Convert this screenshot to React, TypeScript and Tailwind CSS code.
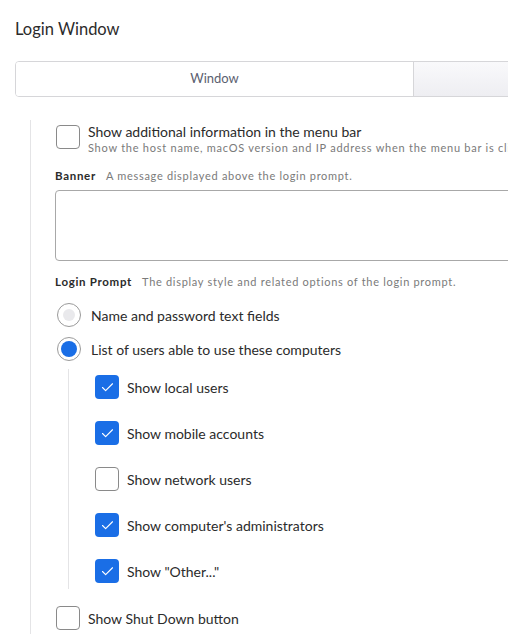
import { Check } from "lucide-react";

type Opt = { label: string; checked: boolean };

const userOptions: Opt[] = [
  { label: "Show local users", checked: true },
  { label: "Show mobile accounts", checked: true },
  { label: "Show network users", checked: false },
  { label: "Show computer's administrators", checked: true },
  { label: "Show \"Other...\"", checked: true },
];

function Box({ checked }: { checked: boolean }) {
  return checked ? (
    <span className="flex h-6 w-6 shrink-0 items-center justify-center rounded-[4px] bg-[#1a6ee6]">
      <Check size={15} strokeWidth={1.8} className="text-white" />
    </span>
  ) : (
    <span className="h-6 w-6 shrink-0 rounded-[4px] border border-[#8a8a8a] bg-white" />
  );
}

function Radio({ on }: { on: boolean }) {
  return (
    <span className="flex h-6 w-6 shrink-0 items-center justify-center rounded-full border border-[#9a9a9a] bg-white">
      <span className={on ? "h-4 w-4 rounded-full bg-[#1a6ee6]" : "h-3 w-3 rounded-full bg-[#e9e9ec]"} />
    </span>
  );
}

function Heading({ title, text }: { title: string; text: string }) {
  return (
    <div className="flex items-baseline gap-[10px] whitespace-nowrap leading-[14px]">
      <span className="text-[11.5px] font-bold tracking-[0.7px]">{title}</span>
      <span className="text-[11px] tracking-[0.7px] text-[#7a7a7a]">{text}</span>
    </div>
  );
}

export default function App() {
  return (
    <div className="min-h-[635px] overflow-hidden bg-white text-[#2b2b2b]" style={{ fontFamily: "Lato, 'Open Sans', sans-serif" }}>
      <h1 className="pl-[15px] pt-[18px] text-[16.5px] leading-[22px]">Login Window</h1>

      <div className="ml-[15px] mt-[21px] flex h-[36px] w-[560px] overflow-hidden rounded-[4px] border border-[#d6d6d9]">
        <div className="flex w-[398px] items-center justify-center border-r border-[#d6d6d9] bg-white text-[13px] text-[#5b6170]">
          Window
        </div>
        <div className="flex-1 bg-gradient-to-b from-[#f9f9fb] to-[#eeeef2]" />
      </div>

      <div className="ml-[30px] mt-[23px] border-l border-[#e4e4e6] pb-[4px] pl-[24px] pt-[5px]">
        <div className="ml-[1px] flex items-start gap-2">
          <Box checked={false} />
          <div className="-mt-[2px] whitespace-nowrap">
            <div className="text-[14px] leading-[18px]">Show additional information in the menu bar</div>
            <div className="text-[11px] leading-[14px] tracking-[0.75px] text-[#7a7a7a]">
              Show the host name, macOS version and IP address when the menu bar is clicked.
            </div>
          </div>
        </div>

        <div className="mt-[14px]">
          <Heading title="Banner" text="A message displayed above the login prompt." />
        </div>
        <div className="-mr-[40px] mt-[7px] h-[71px] rounded-[4px] border border-[#a8a8a8]" />

        <div className="mt-[14px]">
          <Heading title="Login Prompt" text="The display style and related options of the login prompt." />
        </div>

        <div className="ml-[2px] mt-[14px] flex items-center gap-[10px] text-[14px]">
          <Radio on={false} />
          <span>Name and password text fields</span>
        </div>
        <div className="ml-[2px] mt-[10px] flex items-center gap-[10px] text-[14px]">
          <Radio on={true} />
          <span>List of users able to use these computers</span>
        </div>

        <div className="ml-[13px] mt-[8px] flex flex-col gap-[22px] border-l border-[#e4e4e6] pb-[6px] pl-[26px] pt-[6px]">
          {userOptions.map((o) => (
            <div key={o.label} className="flex items-center gap-2 text-[14px]">
              <Box checked={o.checked} />
              <span>{o.label}</span>
            </div>
          ))}
        </div>

        <div className="ml-[1px] mt-[17px] flex items-center gap-2 text-[14px]">
          <Box checked={false} />
          <span>Show Shut Down button</span>
        </div>
      </div>
    </div>
  );
}
